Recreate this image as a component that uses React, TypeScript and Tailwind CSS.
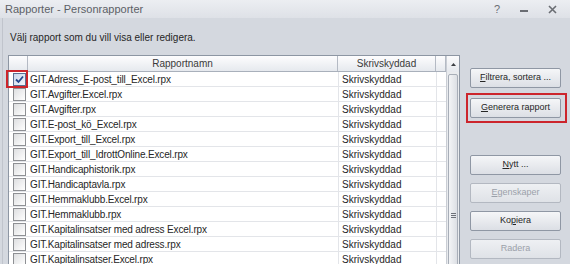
import type { ReactNode } from 'react'

const rows = [
  'GIT.Adress_E-post_till_Excel.rpx',
  'GIT.Avgifter.Excel.rpx',
  'GIT.Avgifter.rpx',
  'GIT.E-post_kö_Excel.rpx',
  'GIT.Export_till_Excel.rpx',
  'GIT.Export_till_IdrottOnline.Excel.rpx',
  'GIT.Handicaphistorik.rpx',
  'GIT.Handicaptavla.rpx',
  'GIT.Hemmaklubb.Excel.rpx',
  'GIT.Hemmaklubb.rpx',
  'GIT.Kapitalinsatser med adress Excel.rpx',
  'GIT.Kapitalinsatser med adress.rpx',
  'GIT.Kapitalinsatser.Excel.rpx',
]

function Checkbox({ checked }: { checked?: boolean }) {
  return (
    <span
      className={
        checked
          ? 'flex h-[13px] w-[13px] items-center justify-center border border-[#5b6f93] bg-linear-to-br from-[#c9d6ea] to-[#f4f7fc]'
          : 'flex h-[13px] w-[13px] items-center justify-center border border-[#8e9094] bg-linear-to-br from-[#dedfe1] to-white'
      }
    >
      {checked && (
        <svg width="11" height="11" viewBox="0 0 11 11" fill="none">
          <path d="M2 5.5L4.5 8L9 2.5" stroke="#24478e" strokeWidth="1.8" />
        </svg>
      )}
    </span>
  )
}

function Button({ children, disabled }: { children: ReactNode; disabled?: boolean }) {
  return (
    <div
      className={
        disabled
          ? 'flex h-[20px] items-center justify-center rounded-[2px] border border-[#b3b8c1] bg-linear-to-b from-[#eef0f3] to-[#dfe2e7] text-[9px] text-[#9ba1aa]'
          : 'flex h-[20px] items-center justify-center rounded-[2px] border border-[#8f97a4] bg-linear-to-b from-[#f5f6f8] to-[#dcdfe5] text-[9px] text-[#262626]'
      }
    >
      {children}
    </div>
  )
}

export default function App() {
  return (
    <div className="relative h-[264px] w-[570px] overflow-hidden bg-[#d4d8df] font-['Liberation_Sans',Arial,sans-serif]">
      {/* Title bar */}
      <div className="flex h-[18px] items-center justify-between bg-linear-to-b from-[#eceef2] to-[#dee1e7] pl-[5px] pr-[13px] text-[11px] text-[#5c5f66]">
        <span>Rapporter - Personrapporter</span>
        <div className="flex items-center gap-[20px] text-[#6a6d73]">
          <span className="text-[11px]">?</span>
          <span className="mt-[4px] h-[2px] w-[8px] bg-[#6a6d73]" />
          <svg width="9" height="9" viewBox="0 0 9 9">
            <path d="M1 1L8 8M8 1L1 8" stroke="#6a6d73" strokeWidth="1.6" />
          </svg>
        </div>
      </div>

      <div className="ml-[2px] h-full border-l border-[#c0c4cc] pl-[5px]">
        <div className="pl-[2px] pt-[14px] text-[10px] leading-[12px] text-[#262626]">
          Välj rapport som du vill visa eller redigera.
        </div>

        <div className="mt-[11px] flex gap-[10px]">
          {/* Report list */}
          <div className="flex w-[452px] border border-[#8d96a3] bg-white">
            <div className="w-[437px]">
              <div className="grid h-[16px] grid-cols-[19px_310px_98px_10px] border-b border-[#a9b0bb] bg-linear-to-b from-[#fdfdfe] to-[#e6e9ee] text-[10px] text-[#3a3a3a]">
                <div className="border-r border-[#b4bac4]" />
                <div className="flex items-center justify-center border-r border-[#b4bac4]">Rapportnamn</div>
                <div className="flex items-center justify-center border-r border-[#b4bac4]">Skrivskyddad</div>
                <div className="border-r border-[#b4bac4]" />
              </div>
              {rows.map((name, i) => (
                <div
                  key={name}
                  className="grid h-[15px] grid-cols-[19px_310px_98px_10px] border-b border-[#e3e5e9] text-[10px] text-[#262626]"
                >
                  <div className="flex items-center pl-[4px]">
                    <Checkbox checked={i === 0} />
                  </div>
                  <div className="flex items-center pl-[2px] tracking-[-0.15px]">{name}</div>
                  <div className="flex items-center border-l border-[#e3e5e9] pl-[3px]">Skrivskyddad</div>
                  <div className="border-l border-[#e3e5e9]" />
                </div>
              ))}
            </div>

            {/* Scrollbar */}
            <div className="flex w-[13px] flex-col border-l border-[#c9cdd4] bg-[#e9ebee]">
              <div className="flex h-[16px] items-center justify-center bg-linear-to-b from-[#fbfbfc] to-[#e6e9ee]">
                <svg width="5" height="3" viewBox="0 0 5 3">
                  <path d="M0 3L2.5 0L5 3Z" fill="#3c3f44" />
                </svg>
              </div>
              <div className="mx-[1px] mt-[2px] flex h-[282px] shrink-0 items-center justify-center rounded-[2px] border border-[#a8aeb8] bg-linear-to-r from-[#f3f4f6] to-[#dcdfe4]">
                <div className="flex flex-col gap-[1px]">
                  <span className="h-[1px] w-[5px] bg-[#6d7179]" />
                  <span className="h-[1px] w-[5px] bg-[#6d7179]" />
                  <span className="h-[1px] w-[5px] bg-[#6d7179]" />
                </div>
              </div>
            </div>
          </div>

          {/* Buttons */}
          <div className="flex w-[91px] flex-col pt-[13px]">
            <Button>
              <span className="underline">F</span>iltrera, sortera ...
            </Button>
            <div className="mt-[10px]">
              <Button>
                <span className="underline">G</span>enerera rapport
              </Button>
            </div>
            <div className="mt-[37px] flex flex-col gap-[8px]">
              <Button>
                <span className="underline">N</span>ytt ...
              </Button>
              <Button disabled>
                <span className="underline">E</span>genskaper
              </Button>
              <Button>
                Ko<span className="underline">p</span>iera
              </Button>
              <Button disabled>Radera</Button>
            </div>
          </div>
        </div>
      </div>

      {/* Red annotation boxes */}
      <div className="absolute left-[6px] top-[70px] h-[18px] w-[22px] border-2 border-[#cc252c]" />
      <div className="absolute left-[466px] top-[93px] h-[30px] w-[101px] border-2 border-[#cc252c]" />
    </div>
  )
}
